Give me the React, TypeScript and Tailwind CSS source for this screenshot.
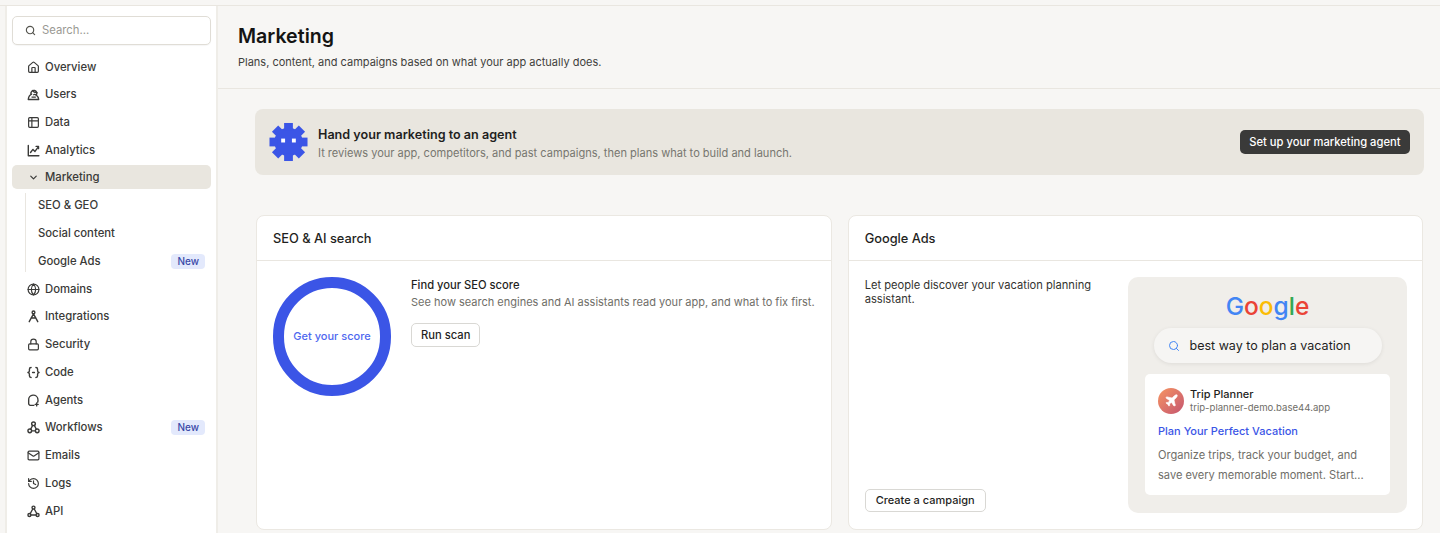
import { ChevronDown, Globe, History, House, Lock, Mail, Plane, Search, Table2 } from "lucide-react";
import type { ReactNode } from "react";

const stroke = { fill: "none", stroke: "currentColor", strokeWidth: 1.5, strokeLinecap: "round" as const, strokeLinejoin: "round" as const };

function Glyph({ children }: { children: ReactNode }) {
  return (
    <svg viewBox="0 0 14 14" className="w-[13px] h-[13px] shrink-0" {...stroke}>
      {children}
    </svg>
  );
}

const UsersIcon = () => (
  <Glyph>
    <path d="M4.2 6.2a3.2 3.2 0 1 1 5.8 1.4" />
    <path d="M6 2.8c1 1.6 2.6 2.4 4.8 2.2" />
    <path d="M5 6.6c-2 .8-3.4 2.8-3.6 5.8h11.2c-.1-1.8-.9-3.4-2.4-4.6-1-.8-2.2-1.2-3-.6" />
    <path d="M5.4 9.8h3.6" />
  </Glyph>
);

const AnalyticsIcon = () => (
  <Glyph>
    <path d="M1.4 1.6v11h11.4" />
    <path d="M3.8 9.2 6.4 5.8l2.2 2.2 3.6-5" />
    <path d="M9.8 2.6h2.6v2.4" />
  </Glyph>
);

const IntegrationsIcon = () => (
  <Glyph>
    <circle cx="7" cy="2.6" r="1.5" />
    <path d="M7 4.2 2.4 12.6M7 4.2l4.6 8.4M4.4 8.6h5.2" />
  </Glyph>
);

const CodeIcon = () => (
  <Glyph>
    <path d="M4.4 1.6c-1.4 0-1.8.7-1.8 1.9v1.6c0 1-.5 1.7-1.6 1.9 1.1.2 1.6.9 1.6 1.9v1.6c0 1.2.4 1.9 1.8 1.9M9.6 1.6c1.4 0 1.8.7 1.8 1.9v1.6c0 1 .5 1.7 1.6 1.9-1.1.2-1.6.9-1.6 1.9v1.6c0 1.2-.4 1.9-1.8 1.9M6 7h2" />
  </Glyph>
);

const AgentsIcon = () => (
  <Glyph>
    <path d="M7.4 12.2H3.6A2 2 0 0 1 1.8 10V6.6a5 5 0 0 1 10-.8c.2 1.2.1 2.2-.3 3" />
    <path d="M10.4 9.6v3.2M8.8 11.2h3.2" />
  </Glyph>
);

const WorkflowsIcon = () => (
  <Glyph>
    <circle cx="7" cy="3" r="2" />
    <circle cx="3" cy="10.6" r="2" />
    <circle cx="11" cy="10.6" r="2" />
    <path d="M6 4.8 4 8.8M8 4.8l2 4M5 10.6h4" />
  </Glyph>
);

const ApiIcon = () => (
  <Glyph>
    <circle cx="7" cy="2.8" r="1.6" />
    <circle cx="2.6" cy="10.8" r="1.6" />
    <circle cx="11.4" cy="10.8" r="1.6" />
    <path d="M6.2 4.3 3.4 9.4M7.8 4.3l2.8 5.1M4.2 10.8h5.6" />
  </Glyph>
);

const lucide = "w-[13px] h-[13px] shrink-0";

const topItems = [
  { label: "Overview", icon: <House className={lucide} strokeWidth={2.2} /> },
  { label: "Users", icon: <UsersIcon /> },
  { label: "Data", icon: <Table2 className={lucide} strokeWidth={2.2} /> },
  { label: "Analytics", icon: <AnalyticsIcon /> },
];

const bottomItems = [
  { label: "Domains", icon: <Globe className={lucide} strokeWidth={2.2} /> },
  { label: "Integrations", icon: <IntegrationsIcon /> },
  { label: "Security", icon: <Lock className={lucide} strokeWidth={2.2} /> },
  { label: "Code", icon: <CodeIcon /> },
  { label: "Agents", icon: <AgentsIcon /> },
  { label: "Workflows", icon: <WorkflowsIcon />, badge: true },
  { label: "Emails", icon: <Mail className={lucide} strokeWidth={2.2} /> },
  { label: "Logs", icon: <History className={lucide} strokeWidth={2.2} /> },
  { label: "API", icon: <ApiIcon /> },
];

function NewBadge() {
  return <span className="ml-auto mr-[6px] rounded-[4px] bg-[#e3e9fc] px-[6px] py-[1px] text-[10px] font-medium leading-[13px] text-[#3a4aa8]">New</span>;
}

function NavItem({ label, icon, badge }: { label: string; icon: ReactNode; badge?: boolean }) {
  return (
    <div className="flex h-6 items-center gap-[5px] pl-[15px] pt-[2px] text-[11.3px] font-medium text-[#3a3a38]">
      {icon}
      <span>{label}</span>
      {badge && <NewBadge />}
    </div>
  );
}

function AgentIcon() {
  const teeth = [0, 45, 90, 135, 180, 225, 270, 315];
  return (
    <svg viewBox="0 0 40 40" className="w-[39px] h-[40px] shrink-0" fill="#3b55e6">
      <circle cx="20" cy="20" r="14.5" />
      {teeth.map((a) => (
        <rect key={a} x="15.5" y="0.5" width="9" height="8" transform={`rotate(${a} 20 20)`} />
      ))}
      <rect x="12.5" y="16.5" width="4" height="4" fill="#fff" />
      <rect x="23.5" y="16.5" width="4" height="4" fill="#fff" />
    </svg>
  );
}

function Card({ title, children }: { title: string; children: ReactNode }) {
  return (
    <section className="flex flex-1 flex-col rounded-[8px] border border-[#ebe8e2] bg-white">
      <h2 className="flex h-[45px] shrink-0 items-center border-b border-[#e9e6e0] px-4 pt-px text-[12.8px] font-medium text-[#1f1f1e]">{title}</h2>
      {children}
    </section>
  );
}

export default function App() {
  return (
    <div className="flex h-[533px] flex-col overflow-hidden bg-[#f7f6f4] text-[#1f1f1e] [font-family:Inter,'Noto_Sans',sans-serif]">
      <div className="h-[6px] shrink-0 border-b border-[#e9e6e0]" />
      <div className="flex min-h-0 flex-1">
        <aside className="ml-[5px] w-[213px] shrink-0 border-x-2 border-[#efede8] bg-white px-[5px] pt-[10px]">
          <div className="flex h-[29px] items-center gap-[6px] rounded-[5px] border border-[#e0ddd6] bg-white px-[12px] text-[11.3px] text-[#9a9993] shadow-[0_1px_1px_rgba(0,0,0,0.04)]">
            <Search className="h-[11px] w-[11px] text-[#55554f]" strokeWidth={2.5} />
            <span>Search...</span>
          </div>
          <nav className="mt-[9px] flex flex-col gap-[3.75px]">
            {topItems.map((item) => (
              <NavItem key={item.label} {...item} />
            ))}
            <div className="flex h-6 items-center gap-[6px] rounded-[5px] bg-[#e9e6df] pl-[16px] pt-px text-[11.3px] font-medium text-[#3a3a38]">
              <ChevronDown className="h-[11px] w-[11px] shrink-0" strokeWidth={2.6} />
              <span>Marketing</span>
            </div>
            <div className="ml-[13px] flex flex-col gap-[3.75px] border-l border-[#e9e6e0] pl-[12px]">
              <div className="flex h-6 items-center pt-[2px] text-[11.3px] font-medium text-[#3a3a38]">SEO &amp; GEO</div>
              <div className="flex h-6 items-center pt-[2px] text-[11.3px] font-medium text-[#3a3a38]">Social content</div>
              <div className="flex h-6 items-center pt-[2px] text-[11.3px] font-medium text-[#3a3a38]">
                <span>Google Ads</span>
                <NewBadge />
              </div>
            </div>
            {bottomItems.map((item) => (
              <NavItem key={item.label} {...item} />
            ))}
          </nav>
        </aside>

        <main className="flex min-w-0 flex-1 flex-col">
          <header className="flex h-[83px] shrink-0 flex-col border-b border-[#e9e6e0] pl-5 pt-[16px]">
            <h1 className="text-[19.6px] font-semibold leading-[28px] text-[#141413]">Marketing</h1>
            <p className="mt-[4px] text-[11px] leading-[16px] text-[#3f3f3c]">Plans, content, and campaigns based on what your app actually does.</p>
          </header>

          <div className="flex flex-col gap-[40px] pl-[37px] pr-4 pt-5">
            <div className="flex h-[66px] items-center rounded-[8px] bg-[#e9e6df] px-[14px]">
              <AgentIcon />
              <div className="ml-[10px] pt-[3px]">
                <div className="text-[12.6px] font-semibold leading-[17px] text-[#1f1f1e]">Hand your marketing to an agent</div>
                <div className="mt-[2px] text-[11.05px] leading-[16px] text-[#77766f]">It reviews your app, competitors, and past campaigns, then plans what to build and launch.</div>
              </div>
              <button className="ml-auto h-6 rounded-[5px] bg-[#3a3a39] px-[9.5px] text-[11.2px] font-medium text-white">Set up your marketing agent</button>
            </div>

            <div className="mx-px flex h-[315px] gap-4">
              <Card title="SEO & AI search">
                <div className="flex gap-[20px] px-4 pt-[16px]">
                  <div className="flex h-[119px] w-[118px] shrink-0 items-center justify-center rounded-full border-[11px] border-[#3b55e6] text-[11px] font-medium text-[#4f68ef]">
                    Get your score
                  </div>
                  <div>
                    <div className="text-[11.2px] font-medium leading-[16px] text-[#1f1f1e]">Find your SEO score</div>
                    <div className="mt-px whitespace-nowrap text-[11px] leading-[16px] text-[#6f6e68]">See how search engines and AI assistants read your app, and what to fix first.</div>
                    <button className="mt-[13px] h-6 rounded-[5px] border border-[#d9d8d4] bg-white px-[9px] text-[11.2px] font-medium">Run scan</button>
                  </div>
                </div>
              </Card>

              <Card title="Google Ads">
                <div className="flex min-h-0 flex-1 justify-between py-4 pl-4 pr-[15px]">
                  <div className="flex w-[240px] flex-col items-start justify-between pb-px">
                    <p className="pt-px text-[11.15px] leading-[14px] text-[#33332f]">Let people discover your vacation planning assistant.</p>
                    <button className="h-[23px] rounded-[5px] border border-[#d9d8d4] bg-white px-[10px] text-[11px] font-medium">Create a campaign</button>
                  </div>
                  <div className="flex w-[279px] flex-col items-center rounded-[10px] bg-[#f0eeea] px-[17px] pt-[12px]">
                    <div className="text-[24.5px] font-medium leading-[34px]">
                      <span className="text-[#4285f4]">G</span>
                      <span className="text-[#ea4335]">o</span>
                      <span className="text-[#fbbc05]">o</span>
                      <span className="text-[#4285f4]">g</span>
                      <span className="text-[#34a853]">l</span>
                      <span className="text-[#ea4335]">e</span>
                    </div>
                    <div className="mt-[5px] flex h-[35px] w-[228px] shrink-0 items-center gap-[10px] rounded-full bg-[#f6f5f3] pl-[14px] text-[12.5px] text-[#1f1f1e] shadow-[0_1px_4px_rgba(0,0,0,0.08)]">
                      <Search className="h-[12px] w-[12px] text-[#4285f4]" strokeWidth={2} />
                      <span className="pt-[2px]">best way to plan a vacation</span>
                    </div>
                    <div className="mt-[11px] h-[121px] w-full shrink-0 rounded-[5px] bg-white px-[13px] pt-[13px]">
                      <div className="flex items-center gap-[6px]">
                        <div className="flex h-[26px] w-[26px] items-center justify-center rounded-full bg-gradient-to-br from-[#f79560] to-[#c4546e]">
                          <Plane className="h-[15px] w-[15px] text-white" fill="#fff" strokeWidth={1} />
                        </div>
                        <div>
                          <div className="text-[11px] font-medium leading-[14px] text-[#1f1f1e]">Trip Planner</div>
                          <div className="text-[9.6px] leading-[13px] text-[#6f6e68]">trip-planner-demo.base44.app</div>
                        </div>
                      </div>
                      <div className="mt-[9px] text-[11px] font-medium leading-[16px] text-[#3b55e6]">Plan Your Perfect Vacation</div>
                      <p className="mt-[7px] text-[11.1px] leading-[19.5px] text-[#6f6e68]">Organize trips, track your budget, and save every memorable moment. Start...</p>
                    </div>
                  </div>
                </div>
              </Card>
            </div>
          </div>
        </main>
      </div>
    </div>
  );
}
